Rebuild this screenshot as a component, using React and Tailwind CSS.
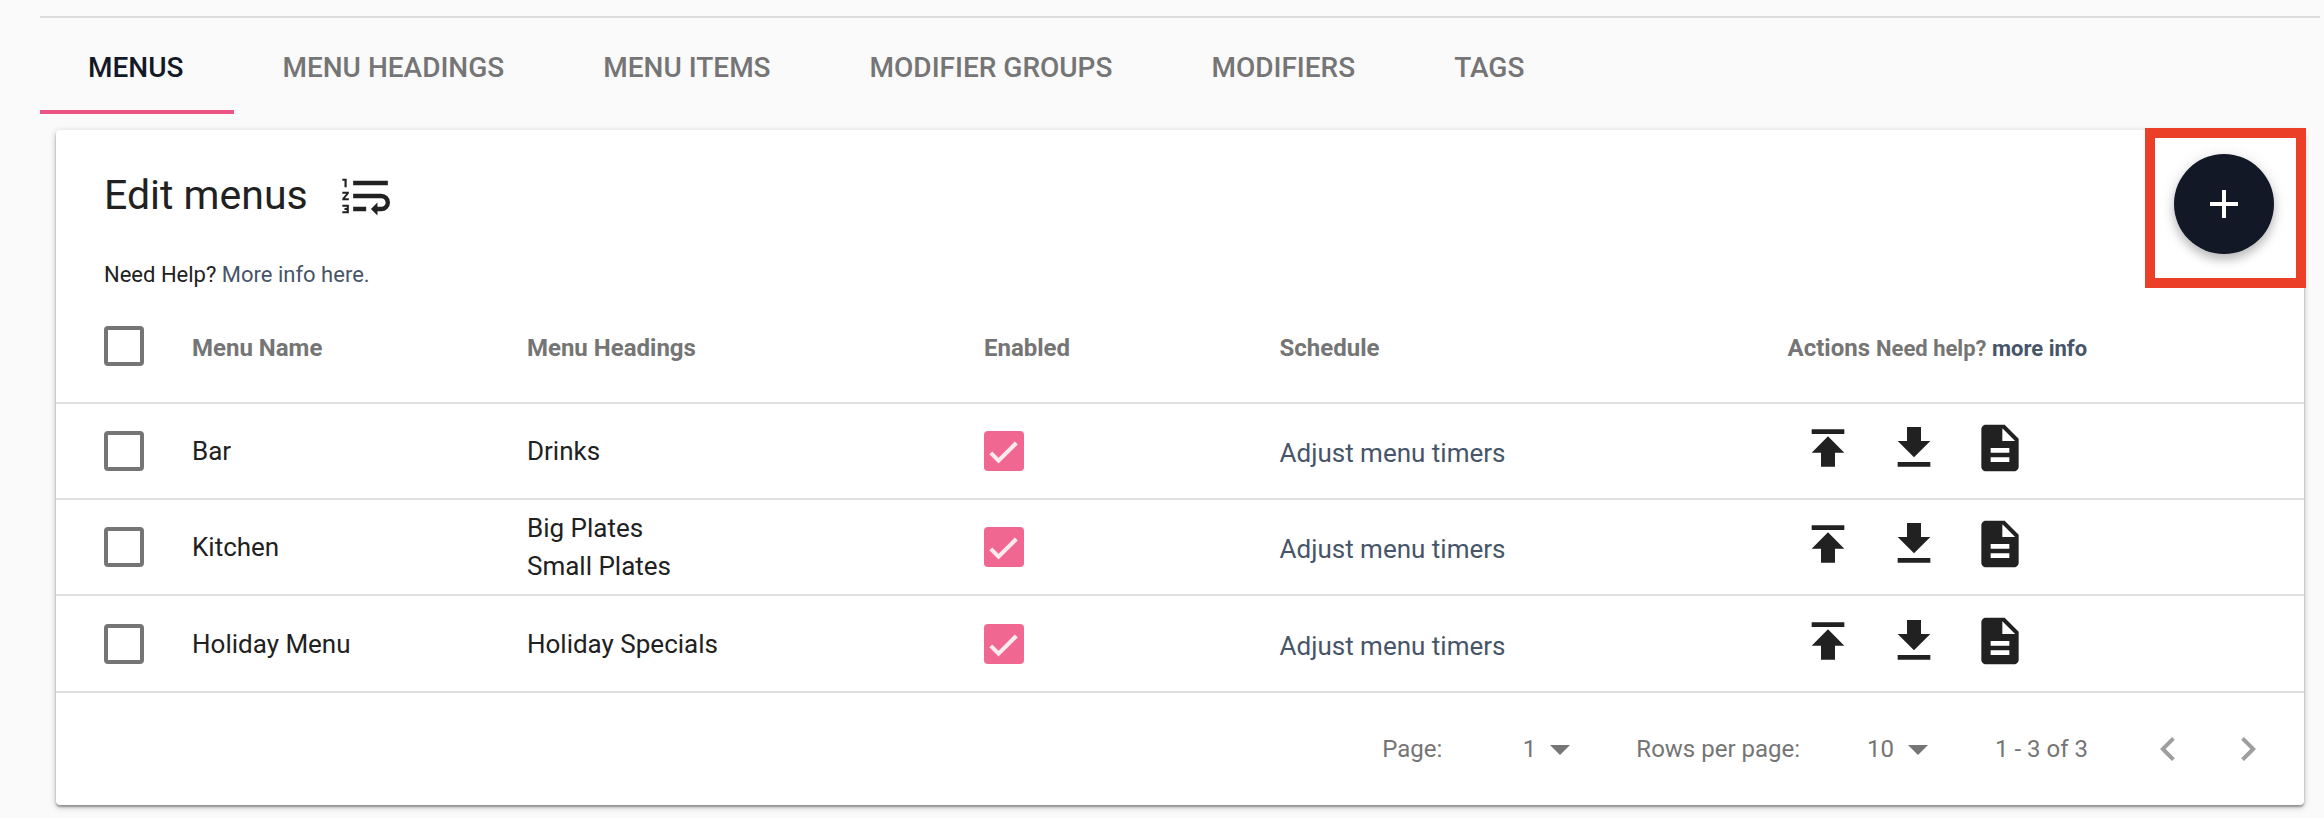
import React from "react";
import {
  MdAdd,
  MdArrowDropDown,
  MdChevronLeft,
  MdChevronRight,
  MdDescription,
  MdGetApp,
  MdPublish,
} from "react-icons/md";

const tabs = ["MENUS", "MENU HEADINGS", "MENU ITEMS", "MODIFIER GROUPS", "MODIFIERS", "TAGS"];

const menus = [
  { name: "Bar", headings: ["Drinks"] },
  { name: "Kitchen", headings: ["Big Plates", "Small Plates"] },
  { name: "Holiday Menu", headings: ["Holiday Specials"] },
];

function SelectBox({ label }) {
  return (
    <input
      type="checkbox"
      aria-label={label}
      className="block size-10 appearance-none rounded border-4 border-[#757575] bg-white"
    />
  );
}

function EnabledBox({ label }) {
  return (
    <span className="grid size-10">
      <input
        type="checkbox"
        defaultChecked
        aria-label={label}
        className="col-start-1 row-start-1 size-10 appearance-none rounded bg-[#f06791]"
      />
      <svg
        viewBox="0 0 24 24"
        aria-hidden="true"
        className="pointer-events-none col-start-1 row-start-1 size-10 p-1"
      >
        <path d="M2.1 13.4 7.9 19.2 21.2 6" fill="none" stroke="#fdebf1" strokeWidth="3.1" />
      </svg>
    </span>
  );
}

function ReorderIcon() {
  return (
    <svg viewBox="0 0 24 24" aria-hidden="true" className="size-[52px]" fill="currentColor">
      <path d="M2 17h2v.5H3v1h1v.5H2v1h3v-4H2v1zm1-9h1V4H2v1h1v3zm-1 3h1.8L2 13.1v.9h3v-1H3.2L5 10.9V10H2v1z" />
      <path d="M7 5h16v2H7zM7 17h6v2H7z" />
      <path d="M7 12h13a3 3 0 0 1 0 6h-2.5" fill="none" stroke="currentColor" strokeWidth="2" />
      <path d="M15.2 18l3-3v6z" />
    </svg>
  );
}

function Pager({ id, label, options }) {
  return (
    <div className="flex items-center">
      <label htmlFor={id}>{label}</label>
      <select
        id={id}
        className="w-[94px] appearance-none bg-transparent text-right [text-align-last:right]"
      >
        {options.map((o) => (
          <option key={o}>{o}</option>
        ))}
      </select>
      <MdArrowDropDown size={48} aria-hidden="true" className="pointer-events-none" />
    </div>
  );
}

export default function App() {
  return (
    <div className="min-h-screen bg-[#fafafa] pt-4 font-['Roboto',sans-serif] text-[#212121]">
      <nav className="mr-1 ml-10 flex border-t-2 border-[#dcdcdc]">
        {tabs.map((t, i) => (
          <a
            key={t}
            href="#"
            className={
              i === 0
                ? "flex h-24 items-center border-b-4 border-[#ec5382] pt-2 pr-[51px] pl-12 text-[28px] font-medium text-[#131827]"
                : "flex h-24 items-center border-b-4 border-transparent pt-2 pr-[51px] pl-12 text-[28px] font-medium text-[#757575]"
            }
          >
            {t}
          </a>
        ))}
      </nav>

      <main className="relative mt-4 mr-5 ml-14 rounded bg-white shadow-[0_2px_2px_rgba(0,0,0,0.3),0_2px_6px_rgba(0,0,0,0.25)]">
        <div className="absolute -top-0.5 -right-0.5 border-10 border-[#eb3f27] pt-4 pr-[22px] pb-6 pl-[19px]">
          <button
            type="button"
            aria-label="Add menu"
            className="flex size-[100px] items-center justify-center rounded-full bg-[#131827] text-white shadow-[0_6px_10px_rgba(0,0,0,0.2),0_2px_16px_rgba(0,0,0,0.12)]"
          >
            <MdAdd size={48} />
          </button>
        </div>

        <header className="px-12 pt-[38px]">
          <div className="flex h-14 items-center gap-[30px]">
            <h1 className="text-[41px]">Edit menus</h1>
            <button type="button" aria-label="Reorder menus">
              <ReorderIcon />
            </button>
          </div>
          <p className="mt-[37px] text-[22px] leading-7">
            Need Help?{" "}
            <a href="#" className="text-[#475569]">
              More info here.
            </a>
          </p>
        </header>

        <table className="w-full table-fixed text-left text-[26px] leading-[38px]">
          <colgroup>
            <col className="w-[6.05%]" />
            <col className="w-[14.9%]" />
            <col className="w-[20.33%]" />
            <col className="w-[13.15%]" />
            <col className="w-[22.6%]" />
            <col />
          </colgroup>
          <thead>
            <tr className="h-[114px] border-b-2 border-[#e0e0e0] text-2xl text-[#757575]">
              <th className="pl-12">
                <SelectBox label="Select all menus" />
              </th>
              <th className="pt-1 font-bold">Menu Name</th>
              <th className="pt-1 font-bold">Menu Headings</th>
              <th className="pt-1 font-bold">Enabled</th>
              <th className="pt-1 font-bold">Schedule</th>
              <th className="pt-1 font-bold">
                Actions{" "}
                <span className="text-[22px]">
                  Need help?{" "}
                  <a href="#" className="text-[#475569]">
                    more info
                  </a>
                </span>
              </th>
            </tr>
          </thead>
          <tbody>
            {menus.map((m) => (
              <tr key={m.name} className="h-24 border-b-2 border-[#e0e0e0] last:h-[97px]">
                <td className="pl-12">
                  <SelectBox label={"Select " + m.name} />
                </td>
                <td>{m.name}</td>
                <td>
                  {m.headings.map((h) => (
                    <div key={h}>{h}</div>
                  ))}
                </td>
                <td>
                  <EnabledBox label={m.name + " enabled"} />
                </td>
                <td className="pt-1">
                  <a href="#" className="text-[#475569]">
                    Adjust menu timers
                  </a>
                </td>
                <td className="pb-1.5">
                  <div className="ml-3 flex gap-[30px]">
                    <button type="button" aria-label="Move to top">
                      <MdPublish size={56} />
                    </button>
                    <button type="button" aria-label="Move to bottom">
                      <MdGetApp size={56} />
                    </button>
                    <button type="button" aria-label="Details">
                      <MdDescription size={56} />
                    </button>
                  </div>
                </td>
              </tr>
            ))}
          </tbody>
        </table>

        <footer className="flex h-28 items-center justify-end pr-8 text-2xl text-[#757575]">
          <Pager id="page" label="Page:" options={["1"]} />
          <div className="ml-[52px]">
            <Pager id="rows" label="Rows per page:" options={["10", "25", "50"]} />
          </div>
          <span className="ml-[53px]">1 - 3 of 3</span>
          <div className="ml-14 flex gap-8 text-[#9e9e9e]">
            <button type="button" aria-label="Previous page">
              <MdChevronLeft size={48} />
            </button>
            <button type="button" aria-label="Next page">
              <MdChevronRight size={48} />
            </button>
          </div>
        </footer>
      </main>
    </div>
  );
}
